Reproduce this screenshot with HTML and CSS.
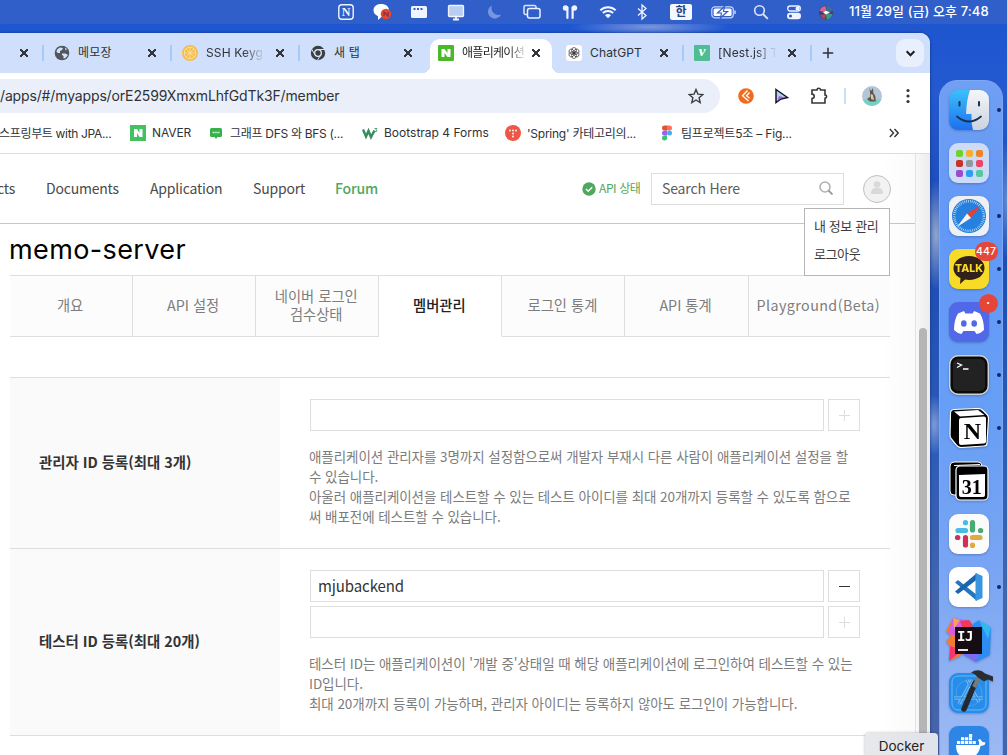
FILE: index.html
```html
<!DOCTYPE html>
<html lang="ko">
<head>
<meta charset="utf-8">
<title>애플리케이션 - NAVER Developers</title>
<link rel="stylesheet" href="styles.css">
</head>
<body>
<div class="desktop">
  <div class="menubar">
    <svg class="mi" viewBox="0 0 20 20"><rect x="2.800" y="2.800" width="14.400" height="14.400" rx="3" fill="none" stroke="#f0f4ff" stroke-width="1.400"/><text class="notion-mini" x="10" y="14.300" text-anchor="middle">N</text></svg>
    <svg class="mi g16" viewBox="0 0 20 20"><path d="M9 2c5 0 8 2.700 8 6.300S14 15 9.500 15L6 18v-3.800C3 13 1.500 11 1.500 8.300 1.500 4.700 4.500 2 9 2z" fill="#fff"/><circle cx="14" cy="12" r="5.300" fill="#df4a31"/><path d="M12 14v-4l4 4v-4" fill="none" stroke="#8f3048" stroke-width="1.300"/></svg>
    <svg class="mi g17" viewBox="0 0 20 20"><path d="M3.500 4h13a1.500 1.500 0 0 1 1.500 1.500v9a1.500 1.500 0 0 1-1.500 1.500h-13A1.500 1.500 0 0 1 2 14.500v-9A1.500 1.500 0 0 1 3.500 4z" fill="#f0f4ff"/><path d="M4.500 7h2M8 7h2M11.500 7h2" stroke="#305fca" stroke-width="2"/></svg>
    <svg class="mi g17" viewBox="0 0 20 20"><rect x="2.500" y="3.500" width="15" height="11" rx="1" fill="#b9cdf3" stroke="#f0f4ff" stroke-width="1.300"/><path d="M7 17.500h6M10 15v2" stroke="#f0f4ff" stroke-width="1.800"/></svg>
    <svg class="mi g18" viewBox="0 0 20 20"><path d="M8 3.500a6.800 6.800 0 1 0 9 9A7 7 0 0 1 8 3.500z" fill="#7895df"/></svg>
    <svg class="mi g18" viewBox="0 0 20 20"><path d="M5 12.500H3.500a1.500 1.500 0 0 1-1.500-1.500V5a1.500 1.500 0 0 1 1.500-1.500h9A1.500 1.500 0 0 1 14 5v1" fill="none" stroke="#dbe5fb" stroke-width="1.500"/><rect x="5.500" y="6.500" width="12.500" height="9.500" rx="2" fill="none" stroke="#f0f4ff" stroke-width="1.500"/></svg>
    <svg class="mi g18" viewBox="0 0 20 20"><g fill="#f0f4ff"><circle cx="5.500" cy="6" r="2.700"/><circle cx="14.500" cy="6" r="2.700"/><rect x="6.300" y="4.500" width="2.200" height="12.500" rx="1.100"/><rect x="11.500" y="4.500" width="2.200" height="12.500" rx="1.100"/></g></svg>
    <svg class="mi g18" viewBox="0 0 20 20"><path d="M2.300 8.300a11 11 0 0 1 15.400 0M4.900 11a7.300 7.300 0 0 1 10.200 0" fill="none" stroke="#f5f8ff" stroke-width="2"/><path d="M7 13.200a4.200 4.200 0 0 1 6 0l-3 3z" fill="#f5f8ff"/></svg>
    <svg class="mi g14" viewBox="0 0 20 20"><path d="M6 6.500l8 7-4 3.500V3l4 3.500-8 7" fill="none" stroke="#f0f4ff" stroke-width="1.300"/></svg>
    <span class="ime">한</span>
    <svg class="mi battery" viewBox="0 0 26 20"><rect x=".8" y="4.800" width="21.500" height="11" rx="3" fill="none" stroke="#c8d6f5" stroke-width="1.200"/><rect x="2.600" y="6.500" width="18" height="7.600" rx="1.600" fill="#fff"/><path d="M24 8.500v3.500" stroke="#c8d6f5" stroke-width="1.500"/><path d="M13.500 4.500L6.500 11h4l-1 5 7-6.500h-4z" fill="#fff" stroke="#305fca" stroke-width="1.200"/></svg>
    <svg class="mi g14" viewBox="0 0 20 20"><circle cx="8.500" cy="8.500" r="4.800" fill="none" stroke="#dbe5fb" stroke-width="1.600"/><path d="M12 12l4.800 4.800" stroke="#dbe5fb" stroke-width="1.800"/></svg>
    <svg class="mi g13" viewBox="0 0 20 20"><rect x="3.700" y="4" width="12.600" height="5" rx="2.500" fill="none" stroke="#f0f4ff" stroke-width="1.300"/><circle cx="13.500" cy="6.500" r="2" fill="#f0f4ff"/><rect x="3" y="10.700" width="14" height="6.600" rx="3.300" fill="#f0f4ff"/><circle cx="6.500" cy="14" r="1.600" fill="#305fca"/></svg>
    <svg class="mi g12" viewBox="0 0 20 20"><circle cx="10" cy="10.500" r="7" fill="#453c6f"/><path d="M3.500 9a7 7 0 0 1 6-5l1 6.500z" fill="#d7668a"/><path d="M10 3.500A7 7 0 0 1 17 9l-6.500 2z" fill="#3d6b9b"/><path d="M16.500 12a7 7 0 0 1-6 5.500l-.5-6z" fill="#3c9b86"/><path d="M4 13a7 7 0 0 0 5 4l1-5z" fill="#b5454f"/><path d="M7 10.500l3-1.800 4 1.800-4 2z" fill="#fff"/></svg>
    <span class="clock">11월 29일 (금) 오후 7:48</span>
  </div>

  <div class="workspace">
    <main class="window">
      <div class="tabstrip">
        <div class="tab tab-first"><span class="x"></span></div>
        <div class="tab">
          <svg class="fav" viewBox="0 0 16 16"><circle cx="8" cy="8" r="7.300" fill="#53575d"/><path d="M3 4.500l3-2 3 .5-1 2-2 1v2H4L2.500 7zM8 8.500h3.500L14 10l-2.500 3-2 .5V11L8 10zM11 2.500l2 1.500-1.500 1.500" fill="#d3e3fd"/></svg>
          <span class="label">메모장</span><span class="x"></span>
        </div>
        <div class="tab">
          <svg class="fav" viewBox="0 0 16 16"><circle cx="8" cy="8" r="8" fill="#f5bd4c"/><circle cx="8" cy="8" r="5.800" fill="none" stroke="#fbe2a9"/><path d="M8 3v10M3 8h10M4.500 4.500l7 7M11.500 4.500l-7 7" stroke="#fbe2a9" stroke-width=".8"/></svg>
          <span class="label fade">SSH Keyg</span><span class="x"></span>
        </div>
        <div class="tab">
          <svg class="fav" viewBox="0 0 16 16"><circle cx="8" cy="8" r="7.200" fill="#3c4043"/><circle cx="8" cy="8" r="3.300" fill="#3c4043" stroke="#e5eefe" stroke-width="1.300"/><path d="M8 4.500h7M5 9.700L1.500 4M11 9.700L7.500 15" stroke="#d3e3fd" stroke-width="1"/></svg>
          <span class="label">새 탭</span><span class="x"></span>
        </div>
        <div class="tab active">
          <svg class="fav" viewBox="0 0 16 16"><rect width="16" height="16" rx="1" fill="#4bb82c"/><path d="M3.500 4h3l3 4V4h3v8h-3l-3-4v4h-3z" fill="#fff"/></svg>
          <span class="label fade">애플리케이션</span><span class="x"></span>
        </div>
        <div class="tab">
          <svg class="fav" viewBox="0 0 16 16"><rect width="16" height="16" rx="3" fill="#fff"/><g fill="none" stroke="#333" stroke-width=".7"><ellipse cx="8" cy="5.500" rx="2.400" ry="3"/><ellipse cx="8" cy="5.500" rx="2.400" ry="3" transform="rotate(60 8 8)"/><ellipse cx="8" cy="5.500" rx="2.400" ry="3" transform="rotate(120 8 8)"/><ellipse cx="8" cy="5.500" rx="2.400" ry="3" transform="rotate(180 8 8)"/><ellipse cx="8" cy="5.500" rx="2.400" ry="3" transform="rotate(240 8 8)"/><ellipse cx="8" cy="5.500" rx="2.400" ry="3" transform="rotate(300 8 8)"/></g></svg>
          <span class="label">ChatGPT</span><span class="x"></span>
        </div>
        <div class="tab">
          <span class="fav velog">v</span>
          <span class="label fade">[Nest.js] T</span><span class="x"></span>
        </div>
        <svg class="newtab" viewBox="0 0 12 12"><path d="M6 .8v10.400M.8 6h10.400" stroke="#2c2f33" stroke-width="1.500"/></svg>
        <span class="tabsearch"><svg viewBox="0 0 10 10"><path d="M1.500 3L5 6.500 8.500 3" fill="none" stroke="#1f1f1f" stroke-width="1.900"/></svg></span>
      </div>

      <div class="toolbar">
        <div class="omnibox"><span class="url">/apps/#/myapps/orE2599XmxmLhfGdTk3F/member</span>
          <svg class="star" viewBox="0 0 16 16"><path d="M8 1.500l1.900 4.600 4.900.4-3.700 3.200 1.100 4.900L8 12l-4.200 2.600 1.100-4.900-3.700-3.200 4.900-.4z" fill="none" stroke="#3c4043" stroke-width="1.400"/></svg>
        </div>
        <svg class="ti t1" viewBox="0 0 16 16"><circle cx="8" cy="8" r="7.800" fill="#ef6c1f"/><path d="M9.500 2.500L4.500 7.700l6 5.300M11.500 4.500L8.500 7.700l3 2.500" fill="none" stroke="#fff" stroke-width="1.300"/></svg>
        <svg class="ti t2" viewBox="0 0 16 16"><path d="M3 1.500l11.500 8L8 11l-5 3.500z" fill="#a9d3f5" stroke="#15131f" stroke-width="1.500"/><path d="M6 8l6 1.500-4.500 1-3.500 3z" fill="#b45ddf"/></svg>
        <svg class="ti t3" viewBox="0 0 18 18"><path d="M2 3h5a1.800 1.800 0 0 1 3.600 0H15v5a1.600 1.600 0 0 1 0 3.200V16H2v-4.500a2.200 2.200 0 0 0 0-4.400z" fill="none" stroke="#34373b" stroke-width="1.600"/></svg>
        <span class="tdiv"></span>
        <svg class="ti t4" viewBox="0 0 20 20"><clipPath id="av"><circle cx="10" cy="10" r="10"/></clipPath><g clip-path="url(#av)"><rect width="20" height="20" fill="#b4c5da"/><path d="M0 14q10-2 20 0v6H0z" fill="#75d1c5"/><path d="M7.500 2l1.500 3 2-3 .3 5 2 3 .5 5.500H8L5 13l3.500-2.500z" fill="#61564a"/><path d="M9 8l2 1 1 5-3-1z" fill="#d8c9a3"/></g></svg>
        <svg class="ti t5" viewBox="0 0 4 16"><g fill="#34373b"><circle cx="2" cy="2.500" r="1.600"/><circle cx="2" cy="8" r="1.600"/><circle cx="2" cy="13.500" r="1.600"/></g></svg>
      </div>

      <div class="bookmarks">
        <div class="bm b1">스프링부트 with JPA...</div>
        <div class="bm b2"><svg viewBox="0 0 16 16"><rect width="16" height="16" fill="#43c160"/><path d="M4 4h3l2.500 4V4h3v8h-3L7 8v4H4z" fill="#fff"/></svg>NAVER</div>
        <div class="bm b3"><svg viewBox="0 0 16 16"><path d="M3.500 3h9A1.500 1.500 0 0 1 14 4.500v6a1.500 1.500 0 0 1-1.500 1.500h-3L8 14l-1.500-2h-3A1.500 1.500 0 0 1 2 10.500v-6A1.500 1.500 0 0 1 3.500 3z" fill="#35b34a"/><path d="M4.500 7.500h7" stroke="#d5f2da" stroke-width="1.700" stroke-dasharray="1.400 .5"/></svg>그래프 DFS 와 BFS (...</div>
        <div class="bm b4"><svg viewBox="0 0 16 16"><path d="M1 4.500l3 7 2.500-5.500L9 12l3.500-6.500" fill="none" stroke="#388c5e" stroke-width="2.500"/><path d="M12.500 3.500h2.500l-1.200 1.300q1.500.2 1 1.400-.7.900-1.800.3" fill="none" stroke="#388c5e" stroke-width=".8"/></svg>Bootstrap 4 Forms</div>
        <div class="bm b5"><svg viewBox="0 0 16 16"><circle cx="8" cy="8" r="8" fill="#ee5745"/><g fill="#fff"><circle cx="5" cy="5.500" r=".9"/><circle cx="8" cy="5.500" r=".9"/><circle cx="11" cy="5.500" r=".9"/><circle cx="8" cy="8.500" r=".9"/><circle cx="8" cy="11.500" r=".9"/></g></svg>'Spring' 카테고리의...</div>
        <div class="bm b6"><svg viewBox="0 0 16 16"><path d="M8 .5H5.500a2.500 2.500 0 0 0 0 5H8z" fill="#e5532d"/><path d="M8 .5h2.500a2.500 2.500 0 0 1 0 5H8z" fill="#f5735f"/><path d="M8 5.500H5.500a2.500 2.500 0 0 0 0 5H8z" fill="#9663f5"/><circle cx="10.500" cy="8" r="2.500" fill="#36b4f2"/><path d="M8 10.500H5.500a2.500 2.500 0 1 0 2.500 2.500z" fill="#39c176"/></svg>팀프로젝트5조 – Fig...</div>
        <svg class="more" viewBox="0 0 10 10"><path d="M.8 1L4.500 5 .8 9M5.500 1l3.700 4-3.700 4" fill="none" stroke="#34373b" stroke-width="1.400"/></svg>
      </div>

      <div class="viewport">
        <div class="page">
          <header class="site">
            <nav class="nav"><span class="n0">cts</span><span class="n1">Documents</span><span class="n2">Application</span><span class="n3">Support</span><span class="n4 green">Forum</span></nav>
            <div class="status"><svg viewBox="0 0 14 14"><circle cx="7" cy="7" r="6.700" fill="#4fa85e"/><path d="M4 7l2.200 2.200L10.200 5.200" fill="none" stroke="#fff" stroke-width="1.500"/></svg><span>API 상태</span></div>
            <div class="search"><span>Search Here</span><svg viewBox="0 0 14 14"><circle cx="6" cy="6" r="5" fill="none" stroke="#b2b2b2" stroke-width="1.600"/><path d="M9.500 9.500l4 4" stroke="#999" stroke-width="1.800"/></svg></div>
            <div class="account">
              <svg viewBox="0 0 28 28"><circle cx="14" cy="14" r="13.500" fill="#f2f2f2" stroke="#bfbfbf"/><circle cx="14" cy="9.500" r="3.300" fill="#d9d9d9"/><path d="M8 19v-1.500C8 15 10 13 12 13h4c2 0 4 2 4 4.500V19z" fill="#d9d9d9"/></svg>
              <div class="menu"><span>내 정보 관리</span><span>로그아웃</span></div>
            </div>
          </header>
          <section class="content">
            <h1>memo-server</h1>
            <div class="apptabs">
              <div>개요</div><div>API 설정</div><div>네이버 로그인<br>검수상태</div><div class="on">멤버관리</div><div>로그인 통계</div><div>API 통계</div><div class="last">Playground(Beta)</div>
            </div>
            <div class="form">
              <div class="row r1">
                <div class="th">관리자 ID 등록(최대 3개)</div>
                <div class="td">
                  <div class="line"><span class="input"></span><span class="btn"><i class="plus"></i></span></div>
                  <p>애플리케이션 관리자를 3명까지 설정함으로써 개발자 부재시 다른 사람이 애플리케이션 설정을 할<br>수 있습니다.<br>아울러 애플리케이션을 테스트할 수 있는 테스트 아이디를 최대 20개까지 등록할 수 있도록 함으로<br>써 배포전에 테스트할 수 있습니다.</p>
                </div>
              </div>
              <div class="row r2">
                <div class="th">테스터 ID 등록(최대 20개)</div>
                <div class="td">
                  <div class="line"><span class="input">mjubackend</span><span class="btn"><i class="minus"></i></span></div>
                  <div class="line"><span class="input"></span><span class="btn"><i class="plus"></i></span></div>
                  <p>테스터 ID는 애플리케이션이 '개발 중'상태일 때 해당 애플리케이션에 로그인하여 테스트할 수 있는<br>ID입니다.<br>최대 20개까지 등록이 가능하며, 관리자 아이디는 등록하지 않아도 로그인이 가능합니다.</p>
                </div>
              </div>
            </div>
          </section>
        </div>
        <div class="scrollbar"><span></span></div>
      </div>
    </main>

    <aside class="dock">
      <div class="app run"><svg viewBox="0 0 40 40"><defs><linearGradient id="fb" x2="0" y2="1"><stop stop-color="#3cc0fb"/><stop offset="1" stop-color="#1e6ff0"/></linearGradient><linearGradient id="fw" x2="0" y2="1"><stop stop-color="#f5f6f8"/><stop offset="1" stop-color="#cbd3df"/></linearGradient></defs><rect width="40" height="40" rx="9" fill="url(#fb)"/><path d="M21 0h10a9 9 0 0 1 9 9v22a9 9 0 0 1-9 9h-7q-2-7-1.500-16H17Q17.500 10 21 0z" fill="url(#fw)"/><path d="M10.500 12v3.500M30 12v3.500" stroke="#17324f" stroke-width="2" stroke-linecap="round"/><path d="M8 26.500q12 10 24 0" fill="none" stroke="#17324f" stroke-width="1.700" stroke-linecap="round"/></svg></div>
      <div class="app"><svg viewBox="0 0 40 40"><rect width="40" height="40" rx="9" fill="#ccdcf8"/><rect x="7" y="7" width="7" height="7" rx="2" fill="#6fd32d"/><rect x="17" y="7" width="7" height="7" rx="2" fill="#f5ae2e"/><rect x="27" y="7" width="7" height="7" rx="2" fill="#ed8425"/><rect x="7" y="17" width="7" height="7" rx="2" fill="#c83227"/><rect x="17" y="17" width="7" height="7" rx="2" fill="#93989e"/><rect x="27" y="17" width="7" height="7" rx="2" fill="#eb4563"/><rect x="7" y="27" width="7" height="7" rx="2" fill="#994dcd"/><rect x="17" y="27" width="7" height="7" rx="2" fill="#2c9df5"/><rect x="27" y="27" width="7" height="7" rx="2" fill="#58c79b"/></svg></div>
      <div class="app run"><svg viewBox="0 0 40 40"><rect width="40" height="40" rx="9" fill="#eef0f3"/><circle cx="20" cy="20" r="17" fill="#2581dd"/><circle cx="20" cy="20" r="14.800" fill="none" stroke="#c9e5fc" stroke-width="2.500" stroke-dasharray=".7 1.200"/><path d="M32 9L18 17.500l4 4.500z" fill="#e64032"/><path d="M8 31l10-13.500 4 4.500z" fill="#f2f4f7"/></svg></div>
      <div class="app run"><svg viewBox="0 0 40 40"><rect width="40" height="40" rx="9" fill="#f8db27"/><path d="M20 7c9 0 15.500 5 15.500 12S29 31 20 31q-2 0-4-.4L11 35l.5-6C7 27 4.500 23.500 4.500 19 4.500 12 11 7 20 7z" fill="#31201c"/><text class="talk" x="20" y="22.600" text-anchor="middle" fill="#f8db27">TALK</text></svg><b class="badge">447</b></div>
      <div class="app run"><svg viewBox="0 0 40 40"><rect width="40" height="40" rx="9" fill="#5168e8"/><path d="M15 9l-6 2.500Q5 18 5 28q3 3.200 7.500 4l2-3h11l2 3Q32 31.200 35 28q0-10-4-16.500L25 9l-1.300 2.500h-7.400z" fill="#fff"/><ellipse cx="14.800" cy="21.500" rx="2.800" ry="3.200" fill="#5168e8"/><ellipse cx="25.200" cy="21.500" rx="2.800" ry="3.200" fill="#5168e8"/></svg><b class="badge small">·</b></div>
      <div class="app run"><svg viewBox="0 0 40 40"><rect x=".7" y=".7" width="38.600" height="38.600" rx="8.500" fill="#0b0b0b" stroke="#ced1d3" stroke-width="1.500"/><rect x="4" y="4" width="32" height="32" rx="5" fill="#222"/><path d="M8 8l4.500 2L8 12.500M14 14h5.500" fill="none" stroke="#fff" stroke-width="1.300"/></svg></div>
      <div class="app run"><svg viewBox="0 0 40 40"><path d="M5 1.500l24-1q3 0 5 2l4 4q1.500 1.500 1.500 4L38 35q0 3-3 3l-23 1.500q-3 0-5-3l-5-6Q1 29 1 27L1.500 5Q1.500 2 5 1.500z" fill="#000" stroke="#fff" stroke-width="1.200"/><path d="M5 3.500L29 2l6.500 5L11 8.500z" fill="#fff"/><path d="M10 12q0-2 2-2l23-1.500q2 0 2 2v23q0 2-2 2L12 37q-2 0-2-2z" fill="#fff"/><text class="notion" x="23.300" y="31" text-anchor="middle">N</text></svg></div>
      <div class="app"><svg viewBox="0 0 40 40"><rect x="1" y="1" width="32" height="33" rx="4" fill="#000" stroke="#fff"/><path d="M5 4.500L31 3.500" stroke="#fff" stroke-width="1"/><rect x="7" y="5" width="32" height="34" rx="4" fill="#000" stroke="#fff" stroke-width="1.200"/><path d="M10 14l26-1v21q0 2-2 2H12q-2 0-2-2z" fill="#fff"/><text class="day" x="22.800" y="32.500" text-anchor="middle">31</text></svg></div>
      <div class="app"><svg viewBox="0 0 40 40"><rect width="40" height="40" rx="9" fill="#fbfbfc"/><g stroke-width="5.200" stroke-linecap="round" fill="none"><path d="M16.500 8.500v.2M9 16.500h7.500" stroke="#4cbbe4"/><path d="M23.500 8.500v7.500M31.500 16.500h.2" stroke="#4aac75"/><path d="M31 23.500h-7.500M23.500 31.500v-.3" stroke="#dfab40"/><path d="M16.500 31v-7.500M8.500 23.500h.3" stroke="#cf2f5b"/></g></svg></div>
      <div class="app run"><svg viewBox="0 0 40 40"><rect width="40" height="40" rx="9" fill="#fff"/><path d="M6 15.500l3-2.500 19 15v6z" fill="#2376c0"/><path d="M6 24.500L9 27l19-14.500V6z" fill="#1966ae"/><path d="M26.500 6l7 3v22l-7 3V6z" fill="#3995e0"/></svg></div>
      <div class="app"><svg class="wide" viewBox="0 0 46 44"><path d="M7 0l14 3 3 20-10 15L3 43l2-13-5-7 5-5-5-5z" fill="#f37a30"/><path d="M7 0l16 3 3 17L2 16z" fill="#d65be8"/><path d="M7 0l7 2-6 9z" fill="#f5a35c"/><path d="M14 3l9-1 5 7-9 7z" fill="#f13a57"/><path d="M27 6l6-4 4 6 8 1-1 28-14 7-12-7z" fill="#2c8ef2"/><path d="M33 2l12 7-3 12z" fill="#31b8ee"/><path d="M4 28l13 4-14 11z" fill="#f43570"/><path d="M17 36l13 8 3-8z" fill="#7d6af0"/><rect x="9" y="9" width="27" height="27" fill="#160d14"/><text class="ij" x="11" y="22.500">IJ</text><path d="M12 32h10" stroke="#fff" stroke-width="1.800"/></svg></div>
      <div class="app"><svg class="xcode" viewBox="0 0 46 46"><rect y="4" width="40" height="40" rx="9" fill="#278dea"/><rect x="3" y="7" width="34" height="34" rx="6" fill="none" stroke="#69b8f4"/><circle cx="20" cy="24" r="13" fill="none" stroke="#479fe9"/><path d="M18 11l12 22M23 11L10 35M5 29h29" fill="none" stroke="#86c2f5" stroke-width="3"/><path d="M18 11l12 22M23 11L10 35M5 29h29" fill="none" stroke="#348fe0" stroke-width="1.400"/><path d="M26 14L15 40" stroke="#25282c" stroke-width="5.500" stroke-linecap="round"/><path d="M30 8l-5 10" stroke="#737a83" stroke-width="4"/><path d="M22 3.500q8-5 14 1l8 3v5l-5-2-4 2-6-4q-3-4-7-5z" fill="#292c30"/></svg></div>
      <div class="app"><svg viewBox="0 0 40 40"><rect width="40" height="40" rx="9" fill="#2d86e6"/><path d="M7 19h23q1-3-1-5l2-1 2.500 3 3 .5-1 2.500-4 1Q29 32 19 32 7 32 7 19z" fill="#fff"/><path d="M8 16.500h19M12 12.800h11M20 9.500h3.500" stroke="#fff" stroke-width="3" stroke-dasharray="3.200 .7"/></svg></div>
    </aside>
  </div>
  <div class="tooltip">Docker</div>
</div>
</body>
</html>
```

FILE: styles.css
```css
* { box-sizing: border-box; }
body { margin: 0; }
svg { display: block; flex: none; }

.desktop {
  position: relative;
  width: 1007px;
  height: 755px;
  overflow: hidden;
  display: flex;
  flex-direction: column;
  font-family: Inter, "Noto Sans CJK KR", sans-serif;
  color: #2f3236;
  background:
    radial-gradient(ellipse 80px 9px at 650px 27px, #7896dd, transparent),
    radial-gradient(ellipse 14px 55px at 936px 235px, #8fa6cd, transparent),
    radial-gradient(ellipse 12px 30px at 934px 425px, #7d9bd8, transparent),
    radial-gradient(ellipse 12px 60px at 1007px 200px, #6589d3, transparent),
    linear-gradient(#1c55d0, #2459d0 12%, #1c4ab4 30%, #2d5cb8 60%, #4365ad 80%, #4664a8);
}

/* menu bar */
.menubar { height: 24px; flex: none; display: flex; align-items: center; padding-left: 336px; background: #305fca; color: #fff; }
.mi { width: 20px; height: 20px; }
.g12 { margin-left: 12px; } .g13 { margin-left: 13px; } .g14 { margin-left: 14px; }
.g16 { margin-left: 16px; } .g17 { margin-left: 17px; } .g18 { margin-left: 18px; }
.ime { width: 22px; height: 16px; margin-left: 18px; border-radius: 2px; background: #f5f8ff; color: #26427f; font-size: 12px; font-weight: 600; line-height: 15px; text-align: center; }
.battery { width: 26px; margin-left: 19px; }
.clock { margin-left: 13px; padding-bottom: 3px; font-size: 13px; font-weight: 500; letter-spacing: .1px; white-space: nowrap; }
.notion-mini { font: bold 12px "Liberation Serif", serif; fill: #f0f4ff; }

.workspace { flex: 1; min-height: 0; display: flex; align-items: flex-start; }
.window { width: 930px; height: 722px; margin-top: 9px; border-radius: 0 10px 0 0; overflow: hidden; background: #fff; display: flex; flex-direction: column; flex: none; box-shadow: 0 0 3px rgba(0, 20, 80, .6); }

/* tab strip */
.tabstrip { height: 40px; flex: none; display: flex; align-items: center; background: #d0dffb; }
.tab { width: 128px; height: 16px; display: flex; align-items: center; flex: none; padding: 0 13px 0 10px; border-right: 2px solid #a8c7fa; font-size: 12px; }
.tab-first { width: 44px; }
.tab-first .x { margin-left: auto; }
.fav { width: 16px; height: 16px; flex: none; }
.label { flex: 1; margin-left: 8px; margin-right: 5px; overflow: hidden; white-space: nowrap; line-height: 18px; letter-spacing: .15px; }
.fade { -webkit-mask-image: linear-gradient(90deg, #000 58%, transparent 92%); mask-image: linear-gradient(90deg, #000 58%, transparent 92%); }
.x { width: 10px; height: 10px; flex: none; background: linear-gradient(45deg, transparent 43%, #34373b 43%, #34373b 57%, transparent 57%) 50% / 8px 8px no-repeat, linear-gradient(-45deg, transparent 43%, #34373b 43%, #34373b 57%, transparent 57%) 50% / 8px 8px no-repeat; }
.tab:nth-child(4) { border-color: transparent; }
.tab.active { position: relative; width: 122px; height: 34px; margin: 6px 4px 0 2px; padding: 0 11px 6px 8px; border: 0; border-radius: 10px 10px 0 0; background: #fff; color: #1f1f1f; align-self: flex-end; }
.tab.active .label { margin-right: 2px; letter-spacing: -.7px; -webkit-mask-image: linear-gradient(90deg, #000 70%, transparent 98%); mask-image: linear-gradient(90deg, #000 70%, transparent 98%); }
.tab.active::before, .tab.active::after { content: ""; position: absolute; bottom: 0; width: 8px; height: 8px; }
.tab.active::before { left: -8px; background: radial-gradient(circle at 0 0, transparent 8px, #fff 8.500px); }
.tab.active::after { right: -8px; background: radial-gradient(circle at 100% 0, transparent 8px, #fff 8.500px); }
.velog { border-radius: 1px; background: #4fbd92; color: #fff; font: italic bold 15px/13px "Liberation Serif", serif; text-align: center; }
.newtab { width: 12px; height: 12px; margin-left: 10px; }
.tabsearch { width: 28px; height: 28px; border-radius: 9px; background: #e9f0fd; margin-left: auto; margin-right: 6px; display: grid; place-items: center; }
.tabsearch svg { width: 11px; height: 11px; }

/* toolbar */
.toolbar { height: 46px; flex: none; display: flex; align-items: center; }
.omnibox { width: 720px; height: 34px; padding-right: 16px; border-radius: 0 17px 17px 0; background: #ebeff9; display: flex; align-items: center; justify-content: space-between; }
.url { padding-bottom: 1px; font-size: 14px; letter-spacing: -.145px; }
.star { width: 16px; height: 16px; }
.ti { width: 16px; height: 16px; }
.t1 { margin-left: 18px; } .t2 { margin-left: 19px; }
.t3 { width: 18px; height: 18px; margin-left: 21px; }
.tdiv { width: 2px; height: 16px; margin-left: 16px; background: #c9defc; }
.t4 { width: 20px; height: 20px; margin-left: 16px; }
.t5 { width: 4px; margin-left: 24px; }

.bookmarks { height: 35px; flex: none; padding-bottom: 7px; border-bottom: 1px solid #dadce0; display: flex; align-items: center; font-size: 12px; white-space: nowrap; }
.bm { display: flex; align-items: center; gap: 6px; flex: none; }
.bm svg { width: 16px; height: 16px; }
.b1 { width: 130px; margin-left: -1px; letter-spacing: -.33px; } .b2 { width: 78px; margin-left: 1px; letter-spacing: -.1px; }
.b3 { width: 154px; letter-spacing: -.3px; } .b4 { width: 143px; } .b5 { width: 154px; letter-spacing: -.25px; } .b6 { width: 230px; letter-spacing: -.2px; }
.more { width: 10px; height: 10px; }

/* page */
.viewport { flex: 1; min-height: 0; display: flex; }
.page { width: 915px; flex: none; font-family: "Noto Sans CJK KR", sans-serif; background: linear-gradient(90deg, #fff 880px, #fafafa); }
.site { height: 70px; border-bottom: 1px solid #c6c6c6; display: flex; align-items: center; font-size: 14px; color: #4a4a4a; white-space: nowrap; }
.nav { width: 582px; display: flex; flex: none; padding-bottom: 2px; letter-spacing: -.2px; }
.nav span { flex: none; }
.n0 { width: 46px; padding-left: 0; text-align: right; padding-right: 31px; display: flex; justify-content: flex-end; }
.n1 { width: 104px; } .n2 { width: 103px; } .n3 { width: 82px; }
.green { color: #4fa85e; font-weight: 500; }
.status { width: 69px; display: flex; align-items: center; gap: 3px; color: #4fa85e; font-size: 12px; letter-spacing: -.4px; flex: none; }
.status span { padding-bottom: 2px; }
.status svg { width: 14px; height: 14px; }
.search { width: 193px; height: 32px; border: 1px solid #dedede; background: #fff; padding: 0 10px; display: flex; align-items: center; justify-content: space-between; color: #5c5c5c; letter-spacing: -.15px; flex: none; }
.search span { padding-bottom: 2px; }
.search svg { width: 14px; height: 14px; margin-top: -2px; }
.account { position: relative; margin-left: 19px; }
.account svg { width: 28px; height: 28px; }
.menu { position: absolute; top: 33px; right: 1px; z-index: 2; width: 86px; height: 68px; border: 1px solid #b5b5b5; background: #fff; padding: 3px 9px; display: flex; flex-direction: column; font-size: 13px; letter-spacing: -.4px; line-height: 28px; color: #3c3c3c; }

.content { width: 880px; margin-left: 10px; }
h1 { height: 51px; margin: 0 0 0 -1px; font: 400 27px/51px Inter, sans-serif; letter-spacing: .38px; color: #000; }
.apptabs { display: grid; grid-template-columns: repeat(6, 123.100px) 1fr; height: 62px; border-top: 1px solid #dedede; margin-bottom: 40px; }
.apptabs div { display: grid; place-items: center; place-content: center; text-align: center; padding: 0 2px 2px 0; border-right: 1px solid #dedede; border-bottom: 1px solid #dedede; background: #fcfcfc; color: #7d7d7d; font-size: 14.300px; line-height: 18px; white-space: nowrap; }
.apptabs .on { background: #fff; border-bottom-color: transparent; color: #222; font-weight: 500; }
.apptabs .last { border-right: 0; letter-spacing: .42px; }
.row { display: flex; border-top: 1px solid #dedede; }
.r1 { height: 171px; }
.r2 { height: 188px; border-bottom: 1px solid #dedede; }
.th { width: 270px; padding: 0 0 3px 29px; background: #fafafa; display: flex; align-items: center; font-size: 14.400px; font-weight: 600; color: #333; white-space: nowrap; }
.td { padding: 21px 30px 0; width: 610px; }
.line { display: flex; gap: 4px; margin-bottom: 4px; }
.input { width: 514px; height: 32px; border: 1px solid #dedede; padding-left: 7px; font-size: 15px; letter-spacing: -.1px; line-height: 30px; color: #333; background: #fff; }
.btn { width: 32px; height: 32px; border: 1px solid #dedede; display: grid; place-items: center; background: #fff; }
.plus { width: 11px; height: 11px; background: linear-gradient(#ddd, #ddd) 50% / 1px 11px no-repeat, linear-gradient(#ddd, #ddd) 50% / 11px 1px no-repeat; }
.minus { width: 11px; height: 1px; background: #333; }
p { margin: 15px 0 0 -1px; font-size: 13.500px; letter-spacing: -.06px; line-height: 20px; color: #7c7c7c; white-space: nowrap; }

.scrollbar { width: 15px; border-left: 1px solid #e3e3e3; background: linear-gradient(90deg, #f8f8f8, #ececec); padding: 174px 3px 0; }
.scrollbar span { display: block; width: 8px; height: 420px; border-radius: 4px; background: #b5b5b5; }

/* dock */
.dock { width: 64px; height: 690px; flex: none; margin: 56px 0 0 9px; padding: 9px 0 0 8.500px; border: 1px solid #7ba7f5; border-radius: 18px 18px 0 0; background: linear-gradient(#709ff3, #6298f7 22%, #689ff5 50%, #78a4f3 70%, #a0bbf3); display: flex; flex-direction: column; gap: 13px; }
.app { position: relative; width: 40px; height: 40px; flex: none; }
.app svg { width: 40px; height: 40px; filter: drop-shadow(0 1px 1px rgba(20, 40, 90, .3)); }
.app svg.wide { width: 46px; height: 44px; margin: -2px 0 0 -3px; }
.app svg.xcode { width: 46px; height: 46px; margin-top: -4px; }
.run::after { content: ""; position: absolute; left: 48px; top: 18px; width: 4px; height: 4px; border-radius: 50%; background: #0b2a73; }
.badge { position: absolute; right: -9px; top: -7px; width: 23px; height: 19px; border-radius: 10px; background: #e4463a; color: #fff; font-size: 10.500px; font-weight: 500; line-height: 19px; text-align: center; }
.badge.small { width: 19px; top: -8px; font-weight: 800; }
.talk { font: 800 10.500px Inter, sans-serif; }
.notion { font: bold 24px "Liberation Serif", serif; }
.day { font: bold 20px "Liberation Serif", serif; }
.ij { font: bold 14px "DejaVu Sans Mono", monospace; letter-spacing: -.5px; fill: #fff; }
.tooltip { position: absolute; left: 865px; top: 733px; width: 73px; height: 30px; border-radius: 4px; background: linear-gradient(90deg, #e8e9eb, #dfe2ea); box-shadow: 0 0 3px rgba(0, 0, 0, .3); font-size: 13.500px; line-height: 27px; text-align: center; color: #222; }
```
